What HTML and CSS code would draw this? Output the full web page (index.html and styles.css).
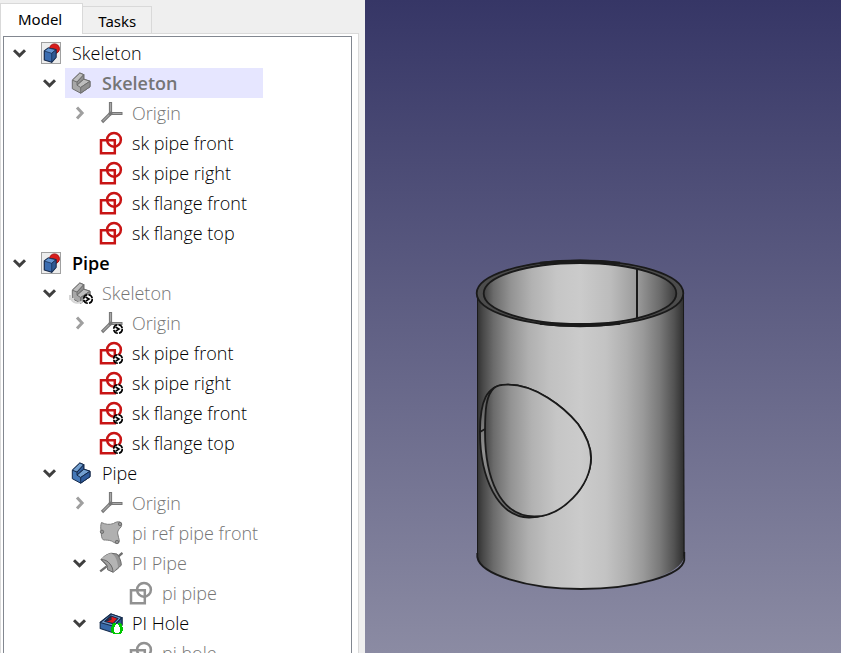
FILE: index.html
```html
<!DOCTYPE html>
<html lang="en">
<head>
<meta charset="utf-8">
<title>Model</title>
<link rel="stylesheet" href="styles.css">
</head>
<body>
<svg class="defs" aria-hidden="true">
  <defs>
    <symbol id="open" viewBox="0 0 14 14"><path d="M1 4.200 6.500 9.600 12 4.200" fill="none" stroke="#3f3f3f" stroke-width="3"/></symbol>
    <symbol id="closed" viewBox="0 0 14 14"><path d="M4 1.500 9.100 7 4 12.500" fill="none" stroke="#9f9f9f" stroke-width="3"/></symbol>
    <symbol id="doc" viewBox="0 0 24 24">
      <rect x="2.500" y="1.500" width="19" height="21" fill="#ededed" stroke="#a0a0a0"/>
      <circle cx="15.500" cy="7.800" r="4.900" fill="#d91c1c" stroke="#a11"/>
      <path d="M5.300 10 9.300 7l7.700 1.700v7.600l-4.300 5L5.300 19z" fill="#3a6cb0" stroke="#16294a" stroke-width="1.200" stroke-linejoin="round"/>
      <path d="M5.300 10 9.300 7l7.700 1.700-4.300 3.600z" fill="#6596d3" stroke="#16294a" stroke-width=".7"/>
      <path d="M12.700 12.300 17 8.700v7.600l-4.300 5z" fill="#2e5994" stroke="#16294a" stroke-width=".7"/>
    </symbol>
    <symbol id="body" viewBox="0 0 24 24">
      <g stroke="var(--edge)" stroke-width="1" stroke-linejoin="round">
        <path d="M3.300 9.200 10.800 2l4 1.700v4.500l6.200 2v5.600l-9.300 6.400-8.400-4.500z" fill="var(--mid)"/>
        <path d="M3.300 9.200 10.800 2l4 1.700L8 11z" fill="var(--light)"/>
        <path d="M8 11l6.800-7.300v4.500L8 14.200z" fill="var(--dark)"/>
        <path d="M8 14.200l6.800-6 6.200 2-9.300 6.300z" fill="var(--light)"/>
        <path d="M11.700 16.500 21 10.200v5.600l-9.300 6.400z" fill="var(--dark)"/>
      </g>
    </symbol>
    <symbol id="origin" viewBox="0 0 24 24">
      <path d="M11.500 1v11.500M11.500 12.500H23.500M11.500 12.500l-8.500 8.500" fill="none" stroke="#777" stroke-width="3.200"/>
      <path d="M11.500 2v10.500H22.500M11.500 12.500l-7.700 7.700" fill="none" stroke="#a8a8a8" stroke-width="1.200"/>
      <circle cx="11.500" cy="12.500" r="2" fill="#777"/>
    </symbol>
    <symbol id="sketch" viewBox="0 0 24 24">
      <g fill="none" stroke="currentColor" stroke-width="2.500"><path d="M2 9.300h13.800v13H2z"/><circle cx="15" cy="8.800" r="6.900"/></g>
    </symbol>
    <symbol id="binder" viewBox="0 0 24 24">
      <path d="M2.500 1.500c4 2 8 2.500 12 1 2-1.500 4.500-2 6.500-1.500 2 1 2 3 1 5-3 3-4 5-3 8 .5 3 2 6 1 7.500-3 1.500-5 0-7.500-1.500-3-1-5-1-8-1C2 17 2.500 14 2.200 10.500 1.500 7 1.500 4 2.500 1.500z" fill="#b0b0b0" stroke="#7d7d7d"/>
      <g fill="#969696" stroke="#6f6f6f"><circle cx="21" cy="3" r="1.700"/><circle cx="3" cy="10.800" r="1.700"/><circle cx="18" cy="21" r="1.700"/></g>
    </symbol>
    <symbol id="revolve" viewBox="0 0 24 24">
      <path d="M1.200 20.300l6.500-5M18 6.500l5.500-4.500" stroke="#6f6f6f" stroke-width="2.300"/>
      <path d="M2 8.500C4.500 5.500 8 3 12 2.200l6 .8c2.500 3 4.200 7 4.300 11-2.500 3-5 5-8.300 7.200z" fill="#949494" stroke="#696969" stroke-linejoin="round"/>
      <path d="M2 8.500C5 5 8.500 3 12 2.200c3.500 1.500 6.500 6 7 13.800L14 21.200C14.500 15 10 9.500 2 8.500z" fill="#b4b4b4"/>
      <path d="M2 8.500c4 .2 6.500 1.200 9 4.500 2 2.500 3 5 3 8.200l-5.500-2.500c.2-3.200-.5-4.700-2-6.200C5.300 11.200 3.500 10 2 8.500z" fill="#a0a0a0" stroke="#696969"/>
    </symbol>
    <symbol id="pocket" viewBox="0 0 24 24">
      <g stroke="#152b4c" stroke-width="1.100" stroke-linejoin="round">
        <path d="M1.200 11.500 12 3l11 3.700V14l-8 8-13.800-4.500z" fill="#3768a8"/>
        <path d="M1.200 11.500 12 3l11 3.700-8.500 8.500z" fill="#6f9cd0"/>
        <path d="M14.500 15.200 23 6.700V14l-8 8z" fill="#2f5890"/>
        <path d="M6 10.500 12 5l7 2.400-5 5.200z" fill="#e01b1b"/>
        <path d="M6 10.500 12 5v3.500z" fill="#8d1010"/>
      </g>
      <path d="M14 13h8v4h1v4h-1v2h-8v-2h-1v-4h1z" fill="#fff"/>
      <path d="M14 12h3v2h-1v2h-1v5h1v1h1v1h-3v-1h-1v-1h-1v-5h1v-3h1zM19 12h3v1h1v3h1v4h-1v2h-1v1h-3v-1h1v-1h1v-5h-1v-2h-1zM15 22h5v1h-5z" fill="#00c800"/>
    </symbol>
    <symbol id="link" viewBox="0 0 24 24">
      <circle cx="19" cy="18" r="4.300" fill="#fff" stroke="#000" stroke-width="1.600" stroke-dasharray="5.500 1.250"/>
      <path d="M16.500 16l3.500 2-3.500 2.300" fill="none" stroke="#000" stroke-width="1.600"/>
    </symbol>
    <symbol id="turn" viewBox="0 0 24 24"><path d="M1 14v4h4M1.500 17c2 5 7 6 12 3.500" fill="none" stroke="#d6d6d6" stroke-width="2"/></symbol>
  </defs>
</svg>
<main class="window">
  <section class="panel">
    <div class="tabs" role="tablist">
      <button class="tab active" role="tab" aria-selected="true">Model</button>
      <button class="tab" role="tab" aria-selected="false">Tasks</button>
    </div>
    <div class="pane">
      <div class="frame">
        <ul class="tree" role="tree">
          <li>
            <div class="row"><button class="toggle" aria-label="Collapse"><svg><use href="#open"/></svg></button><span class="item"><svg><use href="#doc"/></svg>Skeleton</span></div>
            <ul>
              <li>
                <div class="row"><button class="toggle" aria-label="Collapse"><svg><use href="#open"/></svg></button><span class="item selected strong dim"><svg><use href="#body"/></svg>Skeleton</span></div>
                <ul>
                  <li class="row"><button class="toggle" aria-label="Expand"><svg><use href="#closed"/></svg></button><span class="item dim"><svg><use href="#origin"/></svg>Origin</span></li>
                  <li class="row"><span class="toggle"></span><span class="item"><svg class="red"><use href="#sketch"/></svg>sk pipe front</span></li>
                  <li class="row"><span class="toggle"></span><span class="item"><svg class="red"><use href="#sketch"/></svg>sk pipe right</span></li>
                  <li class="row"><span class="toggle"></span><span class="item"><svg class="red"><use href="#sketch"/></svg>sk flange front</span></li>
                  <li class="row"><span class="toggle"></span><span class="item"><svg class="red"><use href="#sketch"/></svg>sk flange top</span></li>
                </ul>
              </li>
            </ul>
          </li>
          <li>
            <div class="row"><button class="toggle" aria-label="Collapse"><svg><use href="#open"/></svg></button><span class="item strong"><svg><use href="#doc"/></svg>Pipe</span></div>
            <ul>
              <li>
                <div class="row"><button class="toggle" aria-label="Collapse"><svg><use href="#open"/></svg></button><span class="item dim"><svg><use href="#body"/><use href="#turn"/><use href="#link"/></svg>Skeleton</span></div>
                <ul>
                  <li class="row"><button class="toggle" aria-label="Expand"><svg><use href="#closed"/></svg></button><span class="item dim"><svg><use href="#origin"/><use href="#link"/></svg>Origin</span></li>
                  <li class="row"><span class="toggle"></span><span class="item"><svg class="red"><use href="#sketch"/><use href="#link"/></svg>sk pipe front</span></li>
                  <li class="row"><span class="toggle"></span><span class="item"><svg class="red"><use href="#sketch"/><use href="#link"/></svg>sk pipe right</span></li>
                  <li class="row"><span class="toggle"></span><span class="item"><svg class="red"><use href="#sketch"/><use href="#link"/></svg>sk flange front</span></li>
                  <li class="row"><span class="toggle"></span><span class="item"><svg class="red"><use href="#sketch"/><use href="#link"/></svg>sk flange top</span></li>
                </ul>
              </li>
              <li>
                <div class="row"><button class="toggle" aria-label="Collapse"><svg><use href="#open"/></svg></button><span class="item"><svg class="blue"><use href="#body"/></svg>Pipe</span></div>
                <ul>
                  <li class="row"><button class="toggle" aria-label="Expand"><svg><use href="#closed"/></svg></button><span class="item dim"><svg><use href="#origin"/></svg>Origin</span></li>
                  <li class="row"><span class="toggle"></span><span class="item dim"><svg><use href="#binder"/></svg>pi ref pipe front</span></li>
                  <li>
                    <div class="row"><button class="toggle" aria-label="Collapse"><svg><use href="#open"/></svg></button><span class="item dim"><svg><use href="#revolve"/></svg>PI Pipe</span></div>
                    <ul>
                      <li class="row"><span class="toggle"></span><span class="item dim"><svg class="grey"><use href="#sketch"/></svg>pi pipe</span></li>
                    </ul>
                  </li>
                  <li>
                    <div class="row"><button class="toggle" aria-label="Collapse"><svg><use href="#open"/></svg></button><span class="item"><svg><use href="#pocket"/></svg>PI Hole</span></div>
                    <ul>
                      <li class="row"><span class="toggle"></span><span class="item dim"><svg class="grey"><use href="#sketch"/></svg>pi hole</span></li>
                    </ul>
                  </li>
                </ul>
              </li>
            </ul>
          </li>
        </ul>
      </div>
    </div>
  </section>
  <section class="view" aria-label="3D view">
    <svg class="scene" viewBox="365 0 476 653" role="img" aria-label="Pipe with a side hole">
      <defs>
        <linearGradient id="outside">
          <stop offset="0" stop-color="#303030"/><stop offset=".03" stop-color="#494949"/><stop offset=".08" stop-color="#6b6b6b"/><stop offset=".16" stop-color="#929292"/><stop offset=".25" stop-color="#b0b0b0"/><stop offset=".35" stop-color="#c1c1c1"/><stop offset=".5" stop-color="#cbcbcb"/><stop offset=".62" stop-color="#c3c3c3"/><stop offset=".72" stop-color="#b0b0b0"/><stop offset=".8" stop-color="#9a9a9a"/><stop offset=".88" stop-color="#7a7a7a"/><stop offset=".95" stop-color="#525252"/><stop offset="1" stop-color="#2c2c2c"/>
        </linearGradient>
        <linearGradient id="inside" gradientUnits="userSpaceOnUse" x1="484" y1="0" x2="676" y2="0">
          <stop offset="0" stop-color="#424242"/><stop offset=".05" stop-color="#6b6b6b"/><stop offset=".14" stop-color="#939393"/><stop offset=".25" stop-color="#b2b2b2"/><stop offset=".38" stop-color="#c6c6c6"/><stop offset=".5" stop-color="#cbcbcb"/><stop offset=".66" stop-color="#bcbcbc"/><stop offset=".8" stop-color="#9a9a9a"/><stop offset=".92" stop-color="#696969"/><stop offset="1" stop-color="#3c3c3c"/>
        </linearGradient>
        <linearGradient id="wall" x2="0" y2="1"><stop offset="0" stop-color="#505050"/><stop offset=".5" stop-color="#929292"/><stop offset="1" stop-color="#606060"/></linearGradient>
      </defs>
      <path d="M477 293V556C480 574 526 589 581 589S682 574 684.500 556L683.500 293z" fill="url(#outside)"/>
      <g fill="none" stroke="#1a1a1a" stroke-width="1.800">
        <path d="M477.300 553V557C480 574 526 589 581 589S682 575 684.300 560V552"/>
        <path d="M477.500 293V556M683.500 293l.5 263" stroke-width="1"/>
        <ellipse cx="580" cy="293.300" rx="103.300" ry="32.700" fill="#4c4c4c"/>
        <ellipse cx="580" cy="293.500" rx="96.300" ry="30.500" fill="url(#inside)"/>
        <path d="M540 263.300Q580 258.500 620 263.300M540 323.300Q580 328 620 323.300" stroke-width="3"/>
        <path d="M637 269v49" stroke-width="2"/>
        <path d="M506.700 384.700C535 384 564 407 578 424 588 438 591 448 591 458 591 486 562 517 529 517.500 498 517 480 478 480 432 480 402 486 385 506.700 384.700z" fill="url(#wall)"/>
        <path d="M506.700 384.700C535 384 564 407 578 424 588 438 591 448 591 458 591 486 562 517 534 516.500 500 516 485 478 485 432 485 410 486 395 494 388 498 385 502 384.700 506.700 384.700z" fill="url(#inside)"/>
        <path d="M480 432l5-3"/>
      </g>
    </svg>
  </section>
</main>
</body>
</html>
```

FILE: styles.css
```css
* { box-sizing: border-box; }

body {
  margin: 0;
  background: #efefef;
  color: #000;
  font: 18px/30px "Open Sans", "Noto Sans", sans-serif;
}

.defs { position: absolute; width: 0; height: 0; }

.window { display: flex; height: 100vh; overflow: hidden; }

.panel { display: flex; flex-direction: column; flex: 0 0 365px; padding-top: 3px; }

.tabs { display: flex; align-items: flex-end; }

.tab {
  height: 27px;
  padding: 0 15px;
  border: 1px solid #d9d9d9;
  border-bottom: 0;
  border-left: 0;
  background: #f0f0f0;
  color: #000;
  font: 15px/28px "Noto Sans", sans-serif;
}

.tab.active {
  height: 31px;
  padding: 0 20px 0 17px;
  margin-bottom: -1px;
  border-left: 1px solid #d9d9d9;
  background: #fff;
  z-index: 1;
}

.pane {
  flex: 1;
  min-height: 0;
  margin-right: 6px;
  padding: 2px 6px 0 2px;
  border: 1px solid #dadada;
  border-bottom: 0;
  background: #fff;
}

.frame {
  height: 100%;
  overflow: hidden;
  padding: 1px 0 0 1px;
  border: 1px solid #828790;
  border-bottom: 0;
  background: #fff;
}

ul { margin: 0; padding: 0; list-style: none; }
ul ul { padding-left: 30px; }
.tree { width: max-content; }

.row { display: flex; height: 30px; }

.toggle {
  display: flex;
  align-items: center;
  justify-content: center;
  width: 30px;
  padding: 0;
  border: 0;
  background: none;
}
.toggle svg { width: 14px; height: 14px; }

.item {
  display: flex;
  flex: 1;
  align-items: center;
  gap: 9px;
  padding: 0 5px 0 4px;
  font-weight: 300;
  white-space: nowrap;
}
.item svg {
  --edge: #6e6e6e;
  --light: #bdbdbd;
  --mid: #a8a8a8;
  --dark: #8f8f8f;
  width: 24px;
  height: 24px;
}
.item .blue { --edge: #14294a; --light: #729fcf; --mid: #4478b8; --dark: #2f5c9c; }
.item .red { color: #c81414; }
.item .grey { color: #919191; }

.dim { color: #757575; }
.item.strong { font-weight: 600; }
.selected { background: #e6e6ff; }

.view {
  flex: 1;
  min-width: 0;
  background: linear-gradient(#363666, #8b8ba3);
}
.scene { display: block; width: 100%; height: 100%; }
```
